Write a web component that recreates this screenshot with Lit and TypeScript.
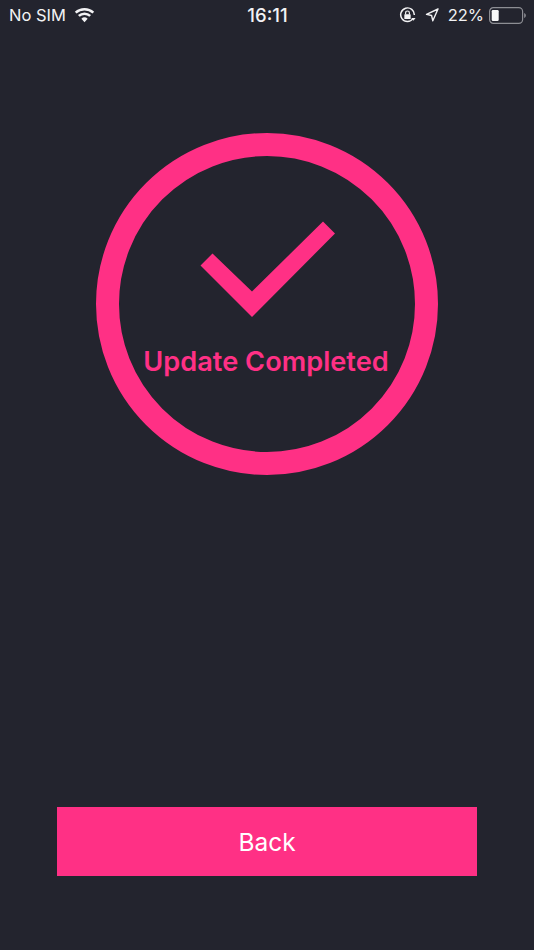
import { LitElement, html, css } from "lit";
import { customElement } from "lit/decorators.js";

@customElement("app-root")
export class AppRoot extends LitElement {
  static styles = css`
    :host {
      display: block;
      width: 534px;
      height: 950px;
      background: #23242e;
      font-family: Inter, "Liberation Sans", sans-serif;
      overflow: hidden;
    }
    .page { display: flex; flex-direction: column; height: 950px; box-sizing: border-box; }
    .status {
      height: 32px;
      display: grid;
      grid-template-columns: 1fr auto 1fr;
      align-items: center;
      padding: 0 8px 2px 9px;
      box-sizing: border-box;
      color: #f2f2f4;
      font-size: 16.5px;
      flex: none;
    }
    .left, .right { display: flex; align-items: center; }
    .left { gap: 8px; }
    .right { justify-content: flex-end; }
    .time { font-weight: 500; font-size: 18.5px; }
    .lock { margin-right: 9px; }
    .arrow { margin-right: 9px; }
    .pct { margin-right: 5px; }
    .main { flex: 1; display: flex; flex-direction: column; align-items: center; }
    .ring {
      margin-top: 101px;
      width: 342px;
      height: 342px;
      box-sizing: border-box;
      border: 23px solid #ff3085;
      border-radius: 50%;
      display: flex;
      flex-direction: column;
      align-items: center;
      padding-top: 65px;
    }
    .check { display: block; margin-left: 1px; }
    .title {
      margin-top: 28px;
      margin-right: 2px;
      color: #ff3085;
      font-size: 27.2px;
      font-weight: 600;
      line-height: 33px;
      white-space: nowrap;
    }
    .spacer { flex: 1; }
    .back {
      width: 420px;
      height: 69px;
      margin-bottom: 74px;
      background: #ff3085;
      border: 0;
      padding: 0;
      color: #fff;
      font: 400 24.5px Inter, "Liberation Sans", sans-serif;
    }
  `;

  render() {
    return html`
      <div class="page">
        <div class="status">
          <div class="left">
            <span>No SIM</span>
            <svg width="21" height="16" viewBox="0 0 20 15">
              <path d="M10 14.5 L7 11 A4.6 4.6 0 0 1 13 11 Z" fill="#f2f2f4"/>
              <path d="M4.6 8.4 A8 8 0 0 1 15.4 8.4" fill="none" stroke="#f2f2f4" stroke-width="2.4"/>
              <path d="M1.6 5.2 A12.6 12.6 0 0 1 18.4 5.2" fill="none" stroke="#f2f2f4" stroke-width="2.4"/>
            </svg>
          </div>
          <div class="time">16:11</div>
          <div class="right">
            <svg class="lock" width="17" height="17" viewBox="0 0 16 16">
              <path d="M13.2 11 A6.4 6.4 0 1 1 14.4 7.6" fill="none" stroke="#f2f2f4" stroke-width="1.4"/>
              <path d="M11.6 10.4 L15.6 10.4 L13.6 13 Z" fill="#f2f2f4"/>
              <rect x="5" y="6.8" width="6" height="4.6" rx="0.6" fill="#f2f2f4"/>
              <path d="M6.2 7 V5.6 A1.8 1.8 0 0 1 9.8 5.6 V7" fill="none" stroke="#f2f2f4" stroke-width="1.1"/>
            </svg>
            <svg class="arrow" width="14" height="14" viewBox="0 0 14 14">
              <path d="M13 1 L1.5 6.4 L6.6 7.5 L7.8 12.8 Z" fill="none" stroke="#f2f2f4" stroke-width="1.4" stroke-linejoin="round"/>
            </svg>
            <span class="pct">22%</span>
            <svg width="37" height="17" viewBox="0 0 37 17">
              <rect x="0.6" y="0.6" width="33" height="15.8" rx="3.8" fill="none" stroke="#8d8e94" stroke-width="1.2"/>
              <rect x="2.7" y="3" width="7" height="11" rx="1.2" fill="#f8f8f8"/>
              <path d="M35.2 6 C36.3 6.4 36.8 7.4 36.8 8.5 C36.8 9.6 36.3 10.6 35.2 11 Z" fill="#8d8e94"/>
            </svg>
          </div>
        </div>
        <div class="main">
          <div class="ring">
            <svg class="check" width="136" height="96" viewBox="0 0 136 96">
              <polygon points="0.5,44.5 12.5,32.5 52,70.5 123,0.5 135,12.5 52,96" fill="#ff3085"/>
            </svg>
            <div class="title">Update Completed</div>
          </div>
          <div class="spacer"></div>
          <button class="back">Back</button>
        </div>
      </div>
    `;
  }
}
